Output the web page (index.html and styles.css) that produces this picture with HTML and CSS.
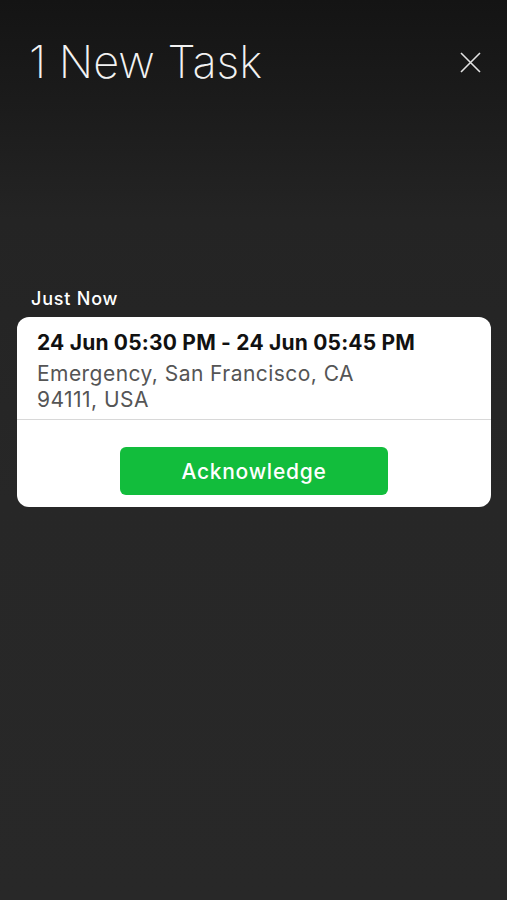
FILE: index.html
```html
<!DOCTYPE html>
<html lang="en">
<head>
    <meta charset="UTF-8">
    <title>1 New Task</title>
    <link rel="stylesheet" href="styles.css">
</head>
<body>

    <div class="header">
        <h1>1 New Task</h1>
        <button class="close-btn" aria-label="Close">
            <svg width="21" height="21" viewBox="0 0 21 21">
                <path d="M1 1 L20 20 M20 1 L1 20" stroke="#e2e2e2" stroke-width="1.6" fill="none"/>
            </svg>
        </button>
    </div>

    <div class="tasks">
        <div class="group-label">Just Now</div>

        <div class="task-card">
            <div class="task-body">
                <div class="task-time">24 Jun 05:30 PM - 24 Jun 05:45 PM</div>
                <div class="task-place">Emergency, San Francisco, CA<br>94111, USA</div>
            </div>
            <div class="task-actions">
                <button class="ack-btn">Acknowledge</button>
            </div>
        </div>
    </div>

</body>
</html>
```

FILE: styles.css
```css
body {
    font-family: Inter, "Open Sans", sans-serif;
    margin: 0;
    height: 900px;
    background: linear-gradient(180deg, #141414 0px, #1b1b1b 100px, #242424 220px, #272727 500px, #282828 900px);
    color: #fff;
}
.header {
    display: flex;
    justify-content: space-between;
    align-items: flex-start;
    padding: 36px 26px 0 29px;
    height: 70px;
}
h1 {
    margin: 0;
    font-size: 45px;
    font-weight: 200;
    line-height: 52px;
    color: #f2f2f2;
}
.close-btn {
    background: none;
    border: none;
    padding: 0;
    margin-top: 16px;
    cursor: pointer;
    line-height: 0;
}
.tasks {
    padding: 182px 16px 0 17px;
}
.group-label {
    font-size: 18px;
    font-weight: 500;
    letter-spacing: 0.8px;
    padding-left: 14px;
    margin-bottom: 7px;
    line-height: 22px;
}
.task-card {
    background: #fff;
    border-radius: 12px;
    overflow: hidden;
}
.task-body {
    padding: 13px 20px 6px;
    border-bottom: 1px solid #d8d8d8;
}
.task-time {
    font-size: 21px;
    font-weight: 700;
    letter-spacing: 0.2px;
    color: #111;
    line-height: 26px;
    margin-bottom: 5px;
}
.task-place {
    font-size: 21px;
    letter-spacing: 0.45px;
    color: #555;
    line-height: 26px;
}
.task-actions {
    display: flex;
    justify-content: center;
    padding: 27px 0 12px;
}
.ack-btn {
    background: #12bd3c;
    color: #fff;
    border: none;
    width: 268px;
    height: 48px;
    border-radius: 6px;
    font-family: inherit;
    font-size: 21px;
    font-weight: 500;
    letter-spacing: 0.75px;
    cursor: pointer;
}
```
